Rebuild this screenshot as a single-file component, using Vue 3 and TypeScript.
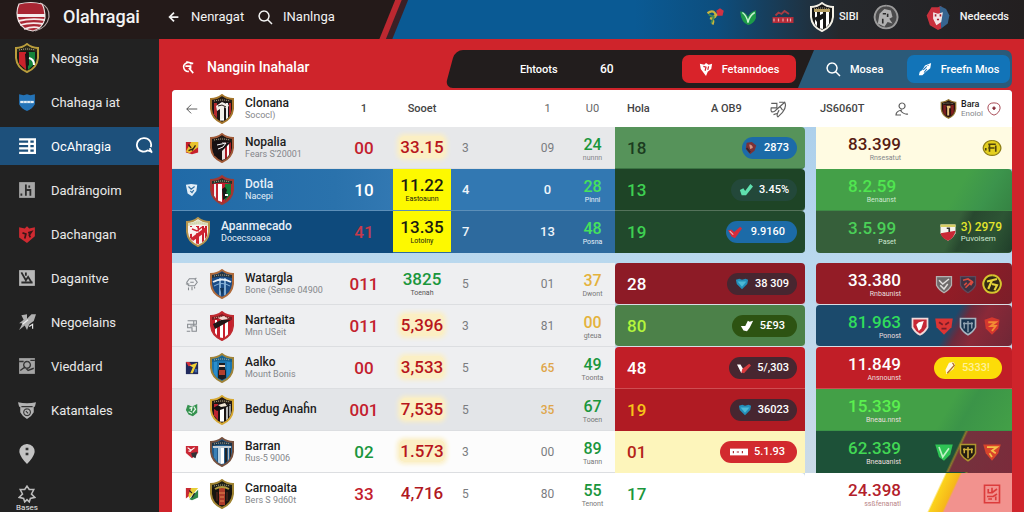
<script setup lang="ts">
import { h } from 'vue'

type Shape = { d: string; f?: string; s?: string; w?: number }
type Stripe = [x: number, width: number, colour: string]
interface CrestSpec {
  trim: string
  field: string
  band: string
  stripes?: Stripe[]
  marks?: Shape[]
}

const SHIELD = 'M2 5 Q8 5 13 1 Q18 5 24 5 V15 Q23 25 13 29 Q3 25 2 15Z'
const BADGE = 'M2 2 H14 V9 Q12 13 8 15 Q4 13 2 9Z'

const crests: Record<string, CrestSpec> = {
  head: { trim: '#a5762c', field: '#1d1616', band: '#251c18', stripes: [[5, 3, '#b32a2e'], [11, 4, '#fff'], [17, 2, '#eee'], [20, 2, '#b4252b']], marks: [{ d: 'M7 12 L13 8 L20 11 L18 15 L15 13 L15 24 L11 26 V15 L8 17Z', f: '#f4f0ea' }, { d: 'M9 12 L13 11 L17 13', s: '#241a18', w: 1 }] },
  nogs: { trim: '#b99d3c', field: '#161a14', band: '#2b2a1c', stripes: [[5, 7, '#c9222b'], [14, 7, '#14843a']], marks: [{ d: 'M11 11 L15 9 L15 22 L12 25 Z', f: '#151515' }, { d: 'M15 15 Q20 16 20 22', s: '#fff', w: 2 }] },
  nopalia: { trim: '#a05a38', field: '#170f10', band: '#201a17', stripes: [[13, 3, '#e8e0df'], [16, 2, '#a81a25'], [18, 2, '#fff'], [20, 2, '#a81a25']], marks: [{ d: 'M4 10 L22 9 L13 18 L5 23Z', f: '#171214' }, { d: 'M8 12 L17 10 L14 14 L9 16', s: '#fff', w: 1 }] },
  dotia: { trim: '#9d3b34', field: '#c2202e', band: '#22352b', stripes: [[5, 2, '#eee'], [9, 4, '#fff'], [16, 6, '#137f3a']], marks: [{ d: 'M13 14 L16 12 L18 15 L17 18 L19 19 L18 22 L14 25Z', f: '#171c19' }, { d: 'M16 19 h3 v2 h-3z', f: '#fff' }] },
  apan: { trim: '#b4944d', field: '#faf3f2', band: '#d9dfbc', stripes: [[5, 2, '#cc2531'], [11, 3, '#cf2431'], [17, 2, '#c81f2e'], [20, 2, '#c81f2e']], marks: [{ d: 'M4 10 H12 L14 16 L5 17Z', f: '#faf3f2' }, { d: 'M22 9 L6 21 L8 24 L22 14Z', f: '#cf2431' }, { d: 'M7 12 L12 14 L17 10', s: '#cf2431', w: 1.5 }] },
  watar: { trim: '#af6a3a', field: '#1b4c86', band: '#23333f', stripes: [[10, 2, '#7faad0'], [15, 2, '#7faad0']], marks: [{ d: 'M4 13 Q13 8 22 13', s: '#e6eff7', w: 2 }, { d: 'M5 17 Q13 12 21 17', s: '#86b2da', w: 1 }, { d: 'M11 19 L13 27 L15 19Z', f: '#123458' }] },
  narte: { trim: '#c02b31', field: '#c71f2d', band: '#7b1f23', stripes: [[6, 2, '#fff'], [11, 3, '#fff'], [16, 3, '#fff']], marks: [{ d: 'M4 13 L14 8 L22 9 L15 13 L6 18Z', f: '#201718' }, { d: 'M9 7 L15 5 L19 8 L13 9Z', f: '#f5d9d2' }] },
  aalko: { trim: '#a08338', field: '#1a75af', band: '#17608e', stripes: [[5, 3, '#2b8ecb'], [18, 3, '#2386c3']], marks: [{ d: 'M10 10 h6 v5 l1 3 v7 l-4 2 l-4 -2 v-7 l1 -3z', f: '#1b1c22' }, { d: 'M10 12 h6 v2 h-6z', f: '#eed2bc' }, { d: 'M10 17 h6 v5 h-6z', f: '#b13f2d' }] },
  bedug: { trim: '#d6a832', field: '#191314', band: '#2a2016', stripes: [[5, 4, '#bd2430'], [11, 4, '#fff'], [17, 2, '#b8b8b8'], [20, 2, '#999']], marks: [{ d: 'M4 13 L13 8 L22 10 L14 14 L8 16Z', f: '#141112' }, { d: 'M9 10 L16 8 L18 11 L12 12Z', f: '#f1e5d4' }] },
  barran: { trim: '#77513f', field: '#245b8a', band: '#1f3345', stripes: [[5, 3, '#3a80b6'], [9, 3, '#bcd2e2'], [12, 3, '#fff'], [16, 2, '#20242a'], [19, 1, '#bbb'], [21, 1, '#222']], marks: [{ d: 'M4 9 H22 V11 H4Z', f: '#c5ced6' }] },
  carno: { trim: '#a08432', field: '#16130f', band: '#1e2218', stripes: [[10, 6, '#ae3b2a']], marks: [{ d: 'M6 10 Q13 6 20 10', s: '#b19b40', w: 2 }, { d: 'M10 14 h6 M11 18 h4 M11 22 h4', s: '#e28b50', w: 1 }, { d: 'M8 13 v9 M18 13 v9', s: '#602821', w: 1 }] },
  juve: { trim: '#f3f0e6', field: '#171717', band: '#171717', stripes: [[6, 2, '#fff'], [11, 3, '#fff'], [17, 3, '#fff']], marks: [{ d: 'M5 7 H21 V10 H5Z', f: '#b39d60' }, { d: 'M5 16 L15 11 L17 15 L8 20Z', f: '#171717' }] },
  bara: { trim: '#8f7430', field: '#2a1011', band: '#211a12', stripes: [[5, 4, '#7d1f20'], [17, 4, '#84211f']], marks: [{ d: 'M10 10 h6 v4 h-2 v11 h-3 v-11z', f: '#e7c27b' }] },
}

const Crest = (props: { name: string }) => {
  const c = crests[props.name]
  return h('svg', { viewBox: '0 0 26 30', 'aria-hidden': 'true' }, [
    h('path', { d: SHIELD, fill: c.field, stroke: c.trim, 'stroke-width': 2 }),
    ...(c.stripes ?? []).map(([x, w, col]) => {
      const end = (p: number) => 27 - ((p - 13) * (p - 13)) / 10
      return h('path', { d: `M${x} 9 H${x + w} V${end(x + w)} L${x} ${end(x)}Z`, fill: col })
    }),
    h('path', { d: 'M3 6 Q9 6 13 3 Q17 6 23 6 V9 Q13 6 3 9Z', fill: c.band }),
    h('path', { d: 'M5 7 Q13 5 21 7', fill: 'none', stroke: '#cfc5a4', 'stroke-width': 1, 'stroke-dasharray': '1 1' }),
    ...(c.marks ?? []).map((m) => h('path', { d: m.d, fill: m.f ?? 'none', stroke: m.s, 'stroke-width': m.w })),
  ])
}
Crest.props = ['name']

const cc = 'currentColor'
const icons: Record<string, Shape[]> = {
  arrow: [{ d: 'M14 8 H2 M7 3 L2 8 L7 13', s: cc, w: 1 }],
  back: [{ d: 'M13 8 H4 M8 3 L3 8 L8 13', s: cc, w: 2 }],
  search: [{ d: 'M7 2 a5 5 0 1 0 0.1 0 M11 11 L15 15', s: cc, w: 1.5 }],
  find: [{ d: 'M12 5 a5 5 0 1 0 -3 8 M9 9 L14 15 M5 7 h6 v3 M6 2 L14 4', s: cc, w: 1.8 }],
  chat: [{ d: 'M8 1 a6 6 0 1 0 3 11 l4 1 M14 9 a6 6 0 0 0 -6 -8 M13 10 l2 4', s: cc, w: 1.6 }],
  list: [{ d: 'M1 2 H15 V14 H1 M1 6 H15 M1 10 H15 M10 2 V14', s: cc, w: 2 }],
  bar: [{ d: 'M1 1 H15 V15 H1Z', f: '#a7a7a7' }, { d: 'M7 3 V13 M7 8 H11 V13 M3 11 V13 M10 4 v2', s: '#2d2d2d', w: 1.6 }],
  redshield: [{ d: 'M1 2 L6 3 L8 1 L10 3 L15 2 V10 L8 16 L1 11Z', f: '#cf2a31' }, { d: 'M4 7 L7 8 L6 12 M9 7 L12 6 L10 9 L11 11', s: '#3b1618', w: 1.5 }],
  blueshield: [{ d: 'M1 1 L5 2 L8 1 L11 2 L15 1 V10 Q13 14 8 16 Q3 14 1 10Z', f: '#2473b7' }, { d: 'M2 7 H14 V9 H2Z', f: '#e3edf5' }, { d: 'M5 7 v2 M8 7 v2 M11 7 v2', s: '#7aa8cf', w: 0.6 }],
  chart: [{ d: 'M1 1 H15 V15 H1Z', f: '#b8b8b8' }, { d: 'M3 3 L7 10 L9 7 L12 12 M3 12 H13 M7 3 V6', s: '#2b2b2b', w: 1.6 }],
  bird: [{ d: 'M3 2 L8 1 L8 5 L12 1 L16 1 L14 7 L10 10 L8 15 L6 11 L1 15 L4 9 L1 9 L5 6Z', f: '#b0b0b0' }, { d: 'M4 10 L9 6 M10 12 l3 -2 v4', s: '#eee', w: 1 }],
  image: [{ d: 'M1 1 H15 V15 H1Z', f: '#a5a5a5' }, { d: 'M1 4 H5 M11 3 H15 M2 12 L6 9 L9 12 L14 10 M8 4 a3 3 0 1 0 .1 0', s: '#333', w: 1.2 }],
  cup: [{ d: 'M0 1 Q8 3 16 1 L15 5 H14 V10 Q12 14 8 16 Q4 14 2 10 V5 H1Z', f: '#b3b3b3' }, { d: 'M8 7 a3 3 0 1 0 .1 0 M3 5 H13 M7 9 l2 2', s: '#353535', w: 1 }],
  pin: [{ d: 'M8 0 A6 6 0 0 1 14 7 Q13 11 8 16 Q3 11 2 7 A6 6 0 0 1 8 0Z', f: '#c3c3c3' }, { d: 'M8 3 v2 M8 7 v2', s: '#333', w: 2.2 }],
  gear: [{ d: 'M8 1 L10 4 L14 4 L12 8 L15 11 L11 12 L10 15 L8 13 L6 15 L5 12 L1 11 L4 8 L2 4 L6 4Z', s: '#bcbcbc', w: 1.4 }],
  flower: [{ d: 'M2 5 Q6 2 8 5 Q10 9 4 9 Q8 10 6 14 M6 8 Q10 7 11 4', s: '#c9b43d', w: 1.8 }, { d: 'M3 6 L7 8 L5 13', s: '#3d8b57', w: 1.4 }, { d: 'M9 3 L12 1 L15 3 L14 7 L10 7Z', f: '#d13243' }],
  leaf: [{ d: 'M1 3 Q6 3 8 8 Q9 4 15 2 V9 Q13 14 8 15 Q2 13 1 3Z', f: '#1d9b48' }, { d: 'M3 4 Q7 7 8 13 Q9 7 14 4', s: '#c7f1cf', w: 1.3 }],
  crown: [{ d: 'M1 8 H15 V12 H1Z', f: '#b52c39' }, { d: 'M3 7 L5 5 L7 6 L9 4 L12 6', s: '#a63c43', w: 1.2 }, { d: 'M2 9 v2 M5 9 v2 M8 9 v2 M11 9 v2 M13 9 v2', s: '#e8a9ae', w: 0.8 }],
  lion: [{ d: 'M8 1 a7 7 0 1 0 .1 0', f: '#4b4b4c', s: '#9b9b9b', w: 1.2 }, { d: 'M3 12 L4 6 L7 3 L11 4 L12 8 L10 9 L12 12 L9 11 L7 14Z', f: '#b0b0b0' }, { d: 'M6 6 h2 M9 6 v2 M6 9 v3', s: '#2a2a2a', w: 1 }],
  mask: [{ d: 'M4 2 L8 2 L10 1 V15 L8 16 L3 13 L1 7Z', f: '#c9303c' }, { d: 'M9 1 L13 3 L15 7 L14 12 L10 15Z', f: '#36648f' }, { d: 'M5 5 L8 6 L11 5 L10 11 L7 13 L5 9Z', f: '#f2e6e6' }, { d: 'M6 7 h1 M9 7 h1 M8 9 v1', s: '#a81f2e', w: 1.3 }],
  heart: [{ d: 'M1 2 L6 3 L8 1 L11 3 L15 2 L14 8 L10 11 L8 16 L5 12 L2 8Z', f: '#fff' }, { d: 'M5 5 L8 6 L7 10 M11 5 L10 9', s: '#d6262f', w: 1.4 }],
  rocket: [{ d: 'M15 1 L14 7 L9 11 L5 15 L1 15 L2 11 L5 9 L8 4Z', f: '#fff' }, { d: 'M6 9 L10 5 M7 12 L10 8 M11 4 h1', s: '#1474bd', w: 1.2 }],
  scribble: [{ d: 'M2 3 H7 V7 H2 Q1 12 5 10 L14 2 Q16 6 12 11 L8 15 Q6 14 9 9 M9 2 L13 2 M4 13 L7 12 M10 6 L12 9', s: '#5e5e5e', w: 1 }],
  person: [{ d: 'M8 2 a3 3 0 1 0 .1 0 M8 9 Q2 10 2 14 H7 M6 9 Q10 14 14 13', s: '#5a5a5a', w: 1.2 }],
  target: [{ d: 'M8 1 Q15 1 15 7 Q14 13 8 15 Q2 13 1 7 Q1 1 8 1', s: '#9d3340', w: 1 }, { d: 'M6 7 H10 M8 5 V9', s: '#7c1b29', w: 1.6 }],
  flagA: [{ d: 'M1 1 H15 V13 L8 15 L1 13Z', f: '#c7212c' }, { d: 'M7 1 H15 V7 L5 14 L1 12Z', f: '#e9c22d' }, { d: 'M4 4 L7 8 M12 5 L8 11 M4 11 L9 9', s: '#302015', w: 1.5 }],
  flagB: [{ d: 'M1 2 L7 1 L14 2 L13 9 L8 15 L3 12Z', f: '#e2eef7' }, { d: 'M4 4 L7 7 L11 4 M6 9 L8 11 L10 8', s: '#2f6fa3', w: 1.4 }],
  flagC: [{ d: 'M5 2 H11 L14 6 L11 10 H4 L2 6Z M1 8 H5 M11 3 L13 1 M4 12 v3 M8 11 v4 M11 11 v2 M6 6 h4', s: '#85898e', w: 1.2 }],
  flagD: [{ d: 'M3 2 H13 V6 H3 V10 H8 V14 H13 V8 H6 M2 14 H6 M10 2 V8', s: '#85898e', w: 1.2 }],
  flagE: [{ d: 'M1 1 H15 V15 H1Z', f: '#20295d' }, { d: 'M1 1 H5 L8 5 L4 6Z', f: '#d6303a' }, { d: 'M5 5 L14 2 L9 14 L6 14 L9 7Z', f: '#f0d136' }, { d: 'M11 9 h3 v4 h-3z', f: '#3e67a6' }],
  flagF: [{ d: 'M3 2 L8 4 L14 1 V11 L9 15 L4 13 L1 8Z', f: '#35924f' }, { d: 'M5 6 L8 5 L7 9 M10 4 L12 7 L9 11 M4 10 L8 12', s: '#e5f4e8', w: 1.5 }],
  flagG: [{ d: 'M1 1 H15 V9 L8 15 L1 9Z', f: '#c92835' }, { d: 'M3 3 L7 6 L11 3 M4 7 h3', s: '#fff', w: 1.3 }, { d: 'M7 9 L14 8 L12 15 L8 13Z', f: '#323236' }],
  flagH: [{ d: 'M1 1 H8 L5 10 L1 13Z', f: '#c82932' }, { d: 'M7 1 H15 L5 13 L4 9Z', f: '#e6cf38' }, { d: 'M15 3 V12 L8 15 L5 14Z', f: '#30864a' }, { d: 'M5 4 L8 7 M11 7 L8 12', s: '#222', w: 1.4 }],
  ball: [{ d: 'M3 2 L9 1 L14 5 L12 11 L7 15 L2 9Z', f: '#7d3135' }, { d: 'M6 4 Q10 4 10 8 L7 9 Z', f: '#d39383' }, { d: 'M3 8 L7 13', s: '#35262e', w: 2 }],
  tickGreen: [{ d: 'M1 8 L5 6 L7 9 L13 1 L16 4 L8 14 L3 14Z', f: '#5fe0ae' }],
  tickRed: [{ d: 'M0 6 L4 5 L7 8 L14 2 L16 4 L8 15 L4 13Z', f: '#d62c3b' }, { d: 'M2 7 L6 11', s: '#f5b1b5', w: 1.4 }],
  tickWhite: [{ d: 'M1 8 L6 8 L9 2 L11 3 L15 2 L11 10 L8 14 L4 13Z', f: '#fff' }],
  tickMix: [{ d: 'M0 4 L4 4 L7 9 L5 14Z', f: '#fff' }, { d: 'M6 9 L14 3 L16 5 L8 14 L5 13Z', f: '#d93a3d' }],
  gem: [{ d: 'M1 3 L5 2 L8 3 L12 2 L15 3 L14 8 L8 14 L2 8Z', f: '#238fb9' }, { d: 'M3 5 H13 L8 11Z', f: '#4dbad6' }],
  ticket: [{ d: 'M0 5 H16 V11 H0Z', f: '#fff' }, { d: 'M3 7 v2 M6 8 h2 M11 7 v2', s: '#a9232c', w: 1 }],
  carrot: [{ d: 'M8 2 L13 1 L15 4 L13 9 L5 15 L4 10Z', f: '#fff8e3' }, { d: 'M12 2 L14 5 L6 14', s: '#b16c22', w: 1.5 }],
  coin: [{ d: 'M8 2 A7 6 0 1 0 8.1 2', f: '#e4cf1f', s: '#8d7d15', w: 1 }, { d: 'M5 5 H11 M5 8 H10 M6 5 V11 M11 6 V11 M3 8 v2', s: '#4e430c', w: 1.3 }],
  cup2: [{ d: BADGE, f: '#f7f3ef' }, { d: 'M2 9 L14 7 Q13 13 8 15 Q3 13 2 9Z', f: '#c92836' }, { d: 'M2 2 H14 V4 H2Z', f: '#d8cf63' }, { d: 'M7 5 h2 v3', s: '#333', w: 1.3 }],
  bGrey: [{ d: BADGE, f: '#6f6a6b', s: '#b5b0b0', w: 1 }, { d: 'M4 5 L7 8 L12 4 M5 9 L8 12 L11 8', s: '#e2dede', w: 1.2 }],
  bDark: [{ d: BADGE, f: '#3e3243', s: '#5e4a5c', w: 1 }, { d: 'M4 5 L8 4 L11 6 L6 11 M10 9 l2 -3 M5 9 l2 -2', s: '#d84b3f', w: 1.4 }],
  bYellow: [{ d: 'M8 1 a7 7 0 1 0 .1 0', f: '#332915', s: '#d6c52e', w: 1.6 }, { d: 'M4 6 L12 4 M8 5 L5 12 M8 8 L12 9 L10 13', s: '#e6d43a', w: 1.7 }],
  bRed: [{ d: BADGE, f: '#c62634', s: '#f0dada', w: 1.4 }, { d: 'M7 5 L11 4 L9 10 L7 12 L5 7Z', f: '#fff' }],
  bFox: [{ d: 'M1 2 H15 L14 9 L8 15 L2 9Z', f: '#dc3534' }, { d: 'M4 5 L7 7 M12 5 L9 7 M6 10 H10', s: '#7a1d28', w: 1.4 }],
  bNavy: [{ d: BADGE, f: '#18344f', s: '#a8b5c0', w: 1.3 }, { d: 'M5 5 V10 M8 4 V13 M11 5 V10 M4 6 H12', s: '#8fa1b0', w: 1.1 }],
  bOrange: [{ d: 'M2 3 L8 1 L14 3 L13 10 L8 15 L3 10Z', f: '#d5372e' }, { d: 'M5 5 H11 L7 8 H11 L8 12', s: '#f38c33', w: 1.5 }],
  bGreen: [{ d: 'M1 2 H15 L13 10 L8 15 L4 12Z', f: '#2fc455' }, { d: 'M4 4 L7 12 L12 5', s: '#bff3c6', w: 1.3 }],
  bBlack: [{ d: BADGE, f: '#221d12', s: '#af952f', w: 1.2 }, { d: 'M5 5 V9 M8 4 V13 M11 5 V9 M4 6 H12', s: '#cfb03a', w: 1.2 }],
  bEagle: [{ d: 'M1 2 H15 L13 9 L8 15 L3 9Z', f: '#d8442b' }, { d: 'M4 4 H12 L8 7 L11 9 M6 9 L8 12', s: '#f6c04a', w: 1.4 }],
  stamp: [{ d: 'M2 1 H14 V15 H2Z M5 4 V7 H8 V3 M8 7 L12 4 M4 10 H9 L12 8 M5 12 H8 M11 10 V13', s: '#dc3c3c', w: 1.3 }],
}

const Icon = (props: { name: string }) =>
  h(
    'svg',
    { viewBox: '0 0 16 16', 'aria-hidden': 'true' },
    icons[props.name].map((p) => h('path', { d: p.d, fill: p.f ?? 'none', stroke: p.s, 'stroke-width': p.w })),
  )
Icon.props = ['name']

const menu = [
  { label: 'Neogsia', crest: 'nogs' },
  { label: 'Chahaga iat', icon: 'blueshield' },
  { label: 'OcAhragia', icon: 'list', active: true },
  { label: 'Dadrängoim', icon: 'bar' },
  { label: 'Dachangan', icon: 'redshield' },
  { label: 'Daganitve', icon: 'chart' },
  { label: 'Negoelains', icon: 'bird' },
  { label: 'Vieddard', icon: 'image' },
  { label: 'Katantales', icon: 'cup' },
]

interface Row {
  id: string
  flag?: string
  crest: string
  name: string
  sub?: string
  rank: string
  rankTone: string
  score: string
  scoreSub?: string
  scoreTone: string
  a: string
  b: string
  bTone?: string
  c: string
  cSub: string
  cTone: string
  d: string
  pill?: { tone: string; icon: string; text: string }
  total: string
  totalSub: string
  badges?: string[]
  extra?: 'prize' | 'chip'
}

const rows: Row[] = [
  { id: 'r1', flag: 'flagA', crest: 'nopalia', name: 'Nopalia', sub: 'Fears S’20001', rank: '00', rankTone: 'red', score: '33.15', scoreTone: 'glow', a: '3', b: '09', c: '24', cSub: 'nunnn', cTone: 'green', d: '18', pill: { tone: 'blue', icon: 'ball', text: '2873' }, total: '83.399', totalSub: 'Rnsesatut', badges: ['coin'] },
  { id: 'r2', flag: 'flagB', crest: 'dotia', name: 'Dotla', sub: 'Nacepi', rank: '10', rankTone: 'white', score: '11.22', scoreSub: 'Eastoaunn', scoreTone: 'box', a: '4', b: '0', c: '28', cSub: 'Pinni', cTone: 'lime', d: '13', pill: { tone: 'moss', icon: 'tickGreen', text: '3.45%' }, total: '8.2.59', totalSub: 'Benaunst' },
  { id: 'r3', crest: 'apan', name: 'Apanmecado', sub: 'Docecsoaoa', rank: '41', rankTone: 'rose', score: '13.35', scoreSub: 'Lotoiny', scoreTone: 'box', a: '7', b: '13', c: '48', cSub: 'Posna', cTone: 'lime', d: '19', pill: { tone: 'blue wide', icon: 'tickRed', text: '9.9160' }, total: '3.5.99', totalSub: 'Paset', extra: 'prize' },
  { id: 'r4', flag: 'flagC', crest: 'watar', name: 'Watargla', sub: 'Bone (Sense 04900', rank: '011', rankTone: 'red', score: '3825', scoreSub: 'Toenah', scoreTone: 'green', a: '5', b: '01', c: '37', cSub: 'Dwont', cTone: 'amber', d: '28', pill: { tone: 'plum', icon: 'gem', text: '38 309' }, total: '33.380', totalSub: 'Rnbaunist', badges: ['bGrey', 'bDark', 'bYellow'] },
  { id: 'r5', flag: 'flagD', crest: 'narte', name: 'Narteaita', sub: 'Mnn USeit', rank: '011', rankTone: 'red', score: '5,396', scoreTone: 'glow', a: '3', b: '81', c: '00', cSub: 'gteua', cTone: 'amber', d: '80', pill: { tone: 'olive', icon: 'tickWhite', text: '5£93' }, total: '81.963', totalSub: 'Ponost', badges: ['bRed', 'bFox', 'bNavy', 'bOrange'] },
  { id: 'r6', flag: 'flagE', crest: 'aalko', name: 'Aalko', sub: 'Mount Bonis', rank: '00', rankTone: 'red', score: '3,533', scoreTone: 'glow', a: '5', b: '65', bTone: 'amber', c: '49', cSub: 'Toonta', cTone: 'green', d: '48', pill: { tone: 'plum', icon: 'tickMix', text: '5/,303' }, total: '11.849', totalSub: 'Ansnounst', extra: 'chip' },
  { id: 'r7', flag: 'flagF', crest: 'bedug', name: 'Bedug Anaĥn', rank: '001', rankTone: 'red', score: '7,535', scoreTone: 'glow', a: '5', b: '35', bTone: 'amber', c: '67', cSub: 'Tooen', cTone: 'green', d: '19', pill: { tone: 'plum', icon: 'gem', text: '36023' }, total: '15.339', totalSub: 'Bneau.nnst' },
  { id: 'r8', flag: 'flagG', crest: 'barran', name: 'Barran', sub: 'Rus-5 9006', rank: '02', rankTone: 'green', score: '1.573', scoreTone: 'glow', a: '3', b: '00', c: '89', cSub: 'Tuann', cTone: 'green', d: '01', pill: { tone: 'crimson', icon: 'ticket', text: '5.1.93' }, total: '62.339', totalSub: 'Bneauanist', badges: ['bGreen', 'bBlack', 'bEagle'] },
  { id: 'r9', flag: 'flagH', crest: 'carno', name: 'Carnoaita', sub: 'Bers S 9d60t', rank: '33', rankTone: 'red', score: '4,716', scoreTone: 'dark', a: '5', b: '80', c: '55', cSub: 'Tenont', cTone: 'green', d: '17', total: '24.398', totalSub: 'ssßfenanatl', badges: ['stamp'] },
]
</script>

<template>
  <div class="app">
    <header class="top">
      <div class="brand">
        <svg class="logo" viewBox="0 0 36 32" aria-hidden="true">
          <path d="M25 2 Q35 6 34 16 Q32 27 20 30" fill="none" stroke="#b5a8a8" stroke-width="1.2" />
          <path d="M4 3 Q16 0 27 3 Q30 8 30 17 Q28 27 18 30 Q8 29 4 21 Q0 12 4 3Z" fill="#a82633" stroke="#eadede" stroke-width="1.2" />
          <path d="M2 13 H30 V16 H2Z" fill="#f6eeee" />
          <path d="M3 20 Q16 17 30 19 M5 24 Q16 21 28 23 M9 28 Q18 25 25 27" fill="none" stroke="#f6e9e9" stroke-width="1.8" />
        </svg>
        <strong class="title">Olahragai</strong>
        <a class="toplink first" href="#"><Icon class="i14" name="back" />Nenragat</a>
        <a class="toplink" href="#"><Icon class="i16" name="search" />INanlnga</a>
      </div>
      <div class="clubs">
        <Icon class="i20" name="flower" />
        <Icon class="i18" name="leaf" />
        <Icon class="i24" name="crown" />
        <span class="pair"><Crest class="crest" name="juve" />SIBI</span>
        <Icon class="i26" name="lion" />
        <a class="account" href="#"><Icon class="i26" name="mask" />Nedeecds</a>
      </div>
    </header>

    <div class="body">
      <nav class="side">
        <a v-for="m in menu" :key="m.label" href="#" class="item" :class="{ active: m.active }">
          <span class="slot">
            <Crest v-if="m.crest" class="crest" :name="m.crest" />
            <Icon v-else class="i18" :name="m.icon ?? ''" />
          </span>
          <span class="label">{{ m.label }}</span>
          <Icon v-if="m.active" class="i18" name="chat" />
        </a>
        <a href="#" class="item" aria-label="Pin"><span class="slot"><Icon class="i20" name="pin" /></span></a>
        <a href="#" class="item"><span class="slot stack"><Icon class="i18" name="gear" />Bases</span></a>
      </nav>

      <main class="main">
        <div class="bar">
          <h1 class="heading"><Icon class="i14" name="find" />Nangıin Inahalar</h1>
          <div class="tools">
            <a class="tab" href="#">Ehtoots</a>
            <a class="tab count" href="#">60</a>
            <button class="btn fav" type="button"><Icon class="i14" name="heart" />Fetanndoes</button>
            <div class="slate">
              <a class="tab find" href="#"><Icon class="i16" name="search" />Mosea</a>
              <button class="btn fresh" type="button"><Icon class="i14" name="rocket" />Freefn Mıos</button>
            </div>
          </div>
        </div>

        <table class="table">
          <colgroup>
            <col />
            <col class="w58" />
            <col class="w58" />
            <col class="w74" />
            <col class="w45" />
            <col class="w45" />
            <col class="w190" />
            <col class="w11" />
            <col class="w196" />
          </colgroup>
          <thead>
            <tr>
              <th>
                <div class="club">
                  <span class="flag"><Icon class="i14" name="arrow" /></span>
                  <Crest class="crest" name="head" />
                  <span class="who"><b>Clonana</b><small>Sococl)</small></span>
                </div>
              </th>
              <th>1</th>
              <th>Sooet</th>
              <th></th>
              <th class="soft">1</th>
              <th class="soft">U0</th>
              <th>
                <div class="split"><span>Hola</span><span class="aob">A OB9</span><Icon class="i18" name="scribble" /></div>
              </th>
              <th></th>
              <th>
                <div class="lasthead">
                  <span class="season">JS6060T</span>
                  <Icon class="i16" name="person" />
                  <span class="mini"><Crest class="crest small" name="bara" /><span class="who tiny"><b>Bara</b><small>Enoiol</small></span><Icon class="i14" name="target" /></span>
                </div>
              </th>
            </tr>
          </thead>
          <tbody>
            <template v-for="r in rows" :key="r.id">
              <tr v-if="r.id === 'r4'" class="spacer" aria-hidden="true"><td colspan="9"></td></tr>
              <tr :class="r.id">
                <td>
                  <div class="club">
                    <span v-if="r.flag" class="flag"><Icon class="i14" :name="r.flag" /></span>
                    <Crest class="crest" :name="r.crest" />
                    <span class="who"><b>{{ r.name }}</b><small v-if="r.sub">{{ r.sub }}</small></span>
                  </div>
                </td>
                <td class="num" :class="r.rankTone">{{ r.rank }}</td>
                <td class="num score" :class="r.scoreTone"><span>{{ r.score }}</span><small v-if="r.scoreSub">{{ r.scoreSub }}</small></td>
                <td class="minor left">{{ r.a }}</td>
                <td class="minor" :class="r.bTone">{{ r.b }}</td>
                <td class="num pts" :class="r.cTone">{{ r.c }}<small>{{ r.cSub }}</small></td>
                <td class="state">
                  <div class="split">
                    <span class="num">{{ r.d }}</span>
                    <span v-if="r.pill" class="pill" :class="r.pill.tone"><Icon class="i16" :name="r.pill.icon" />{{ r.pill.text }}</span>
                  </div>
                </td>
                <td class="gap"></td>
                <td class="total">
                  <div class="sum">
                    <span class="big">{{ r.total }}<small>{{ r.totalSub }}</small></span>
                    <span class="badges">
                      <Icon v-for="b in r.badges" :key="b" class="i20" :name="b" />
                      <span v-if="r.extra === 'prize'" class="prize"><Icon class="i20" name="cup2" /><span>3) 2979<small>Puvoisem</small></span></span>
                      <span v-if="r.extra === 'chip'" class="pill gold"><Icon class="i14" name="carrot" />5333!</span>
                    </span>
                  </div>
                </td>
              </tr>
            </template>
          </tbody>
        </table>
      </main>
    </div>
  </div>
</template>

<style>
body {
  background: #222;
}
</style>

<style scoped>
.app {
  height: 100vh;
  display: flex;
  flex-direction: column;
  overflow: hidden;
  font-family: Roboto, 'Liberation Sans', sans-serif;
  font-size: 13px;
  color: #222;
}
a {
  color: inherit;
  text-decoration: none;
}
svg {
  flex: none;
  display: block;
}
.i14 { width: 14px; height: 14px; }
.i16 { width: 16px; height: 16px; }
.i18 { width: 18px; height: 18px; }
.i20 { width: 20px; height: 20px; }
.i24 { width: 24px; height: 24px; }
.i26 { width: 26px; height: 26px; }
.crest { width: 26px; height: 30px; }
.crest.small { width: 17px; height: 20px; }

.top {
  flex: none;
  height: 39px;
  display: flex;
  justify-content: space-between;
  background: linear-gradient(90deg, #0a5a94 62%, #0d4e7e 70%, #25282c 82%, #231f20);
  color: #f2f2f2;
}
.brand {
  width: 408px;
  display: flex;
  align-items: center;
  padding-bottom: 6px;
  box-sizing: border-box;
  background: linear-gradient(112deg, #241a19 calc(100% - 27px), #bd2830 calc(100% - 26px), #bd2830 calc(100% - 21px), #3b2026 calc(100% - 20px), #3b2026 calc(100% - 15px), transparent calc(100% - 14px));
}
.logo {
  width: 36px;
  height: 32px;
  margin-left: 15px;
}
.title {
  margin-left: 12px;
  font-size: 18px;
  font-weight: 500;
  width: 104px;
}
.toplink {
  display: flex;
  align-items: center;
  gap: 10px;
}
.toplink.first {
  width: 90px;
}
.clubs {
  display: flex;
  align-items: center;
  gap: 14px;
  padding: 0 15px 6px 0;
  font-weight: 500;
  font-size: 11px;
}
.pair,
.account {
  display: flex;
  align-items: center;
  gap: 4px;
}
.account {
  margin-left: 12px;
  gap: 9px;
}

.body {
  flex: 1;
  display: flex;
  min-height: 0;
}
.side {
  flex: none;
  width: 159px;
  background: #222;
  color: #e9e9e9;
  display: flex;
  flex-direction: column;
  gap: 6px;
}
.item {
  flex: none;
  height: 38px;
  display: flex;
  align-items: center;
  padding: 0 6px 0 12px;
}
.item.active {
  background: #1d507b;
  color: #fff;
}
.slot {
  width: 30px;
  display: flex;
  justify-content: center;
  margin-right: 9px;
}
.stack {
  flex-direction: column;
  align-items: center;
  font-size: 8px;
}
.label {
  flex: 1;
}

.main {
  flex: 1;
  min-width: 0;
  padding: 11px 12px 0 13px;
  background: #cf242b;
}
.bar {
  height: 38px;
  margin-bottom: 2px;
  display: flex;
  align-items: center;
  justify-content: space-between;
  color: #fff;
}
.heading {
  margin: 0 0 4px 9px;
  display: flex;
  align-items: center;
  gap: 12px;
  font-size: 14px;
  font-weight: 500;
}
.tools {
  position: relative;
  z-index: 0;
  width: 562px;
  height: 38px;
  display: flex;
  align-items: center;
  font-size: 12px;
}
.tools::before,
.slate::before {
  content: '';
  position: absolute;
  z-index: -1;
  inset: 0 16px 0 0;
  background: #221d1d;
  border-radius: 8px;
  transform: skewX(-15deg);
}
.tab {
  margin-left: 70px;
  width: 36px;
  font-size: 11px;
  font-weight: 500;
}
.tab.count {
  margin-left: 44px;
  font-size: 12px;
}
.btn {
  height: 28px;
  border: 0;
  border-radius: 7px;
  display: flex;
  align-items: center;
  justify-content: center;
  gap: 9px;
  padding: 0;
  font: 500 11px Roboto, 'Liberation Sans', sans-serif;
  color: #fff;
}
.fav {
  width: 114px;
  margin-left: auto;
  background: #d9232a;
}
.slate {
  position: relative;
  z-index: 0;
  width: 216px;
  height: 38px;
  display: flex;
  align-items: center;
  justify-content: space-between;
}
.slate::before {
  inset: 0 0 0 2px;
  border-radius: 0 7px 7px 0;
  background: #2b5a79;
  transform: none;
  clip-path: polygon(16px 0, 100% 0, 100% 100%, 0 100%);
}
.tab.find {
  display: flex;
  align-items: center;
  gap: 9px;
  margin-left: 29px;
  width: auto;
}
.fresh {
  width: 103px;
  margin-right: 2px;
  background: #1274b8;
}

.table {
  width: 100%;
  table-layout: fixed;
  border-spacing: 0;
  background: linear-gradient(#a9cdea, #b9d8ee 40%, #cfdbe6);
  border-radius: 4px 4px 0 0;
}
.w58 { width: 58px; }
.w74 { width: 74px; }
.w45 { width: 45px; }
.w190 { width: 190px; }
.w11 { width: 11px; }
.w196 { width: 196px; }
th {
  height: 37px;
  padding: 0;
  background: #fff;
  font-size: 11px;
  font-weight: 500;
  color: #444;
}
th:first-child {
  border-radius: 4px 0 0 0;
  text-align: left;
}
th:last-child {
  border-radius: 0 4px 0 0;
}
.soft {
  font-weight: 400;
  color: #666;
}
td {
  box-sizing: border-box;
  height: 42px;
  padding: 0;
  text-align: center;
  border-bottom: 1px solid #dcdee1;
  background: #eeeff1;
}
.spacer td {
  height: 10px;
  border: 0;
  background: transparent;
}
.club {
  display: flex;
  align-items: center;
  padding-left: 13px;
  white-space: nowrap;
}
.flag {
  width: 24px;
  display: flex;
}
.club .crest {
  margin-right: 10px;
}
.who {
  display: flex;
  flex-direction: column;
  text-align: left;
  line-height: 13px;
}
.who b {
  font-size: 12px;
  font-weight: 500;
  color: #1c1c1c;
}
.who small {
  font-size: 9px;
  line-height: 11px;
  font-weight: 400;
  color: #85878b;
}
.tiny b {
  font-size: 9px;
  line-height: 9px;
}
.tiny small {
  font-size: 8px;
  line-height: 9px;
}
.split {
  display: flex;
  align-items: center;
  justify-content: space-between;
  padding: 0 8px 0 12px;
}
th .split {
  padding-right: 18px;
}
.aob {
  margin-left: 34px;
}
.lasthead {
  display: flex;
  align-items: center;
  justify-content: space-between;
  padding: 0 11px 0 4px;
}
.season {
  width: 44px;
  text-align: left;
}
.mini {
  display: flex;
  align-items: center;
  gap: 4px;
}

.num {
  font-size: 17px;
  font-weight: 500;
}
.num small,
.big small,
.prize small {
  display: block;
  font-size: 7px;
  line-height: 8px;
  font-weight: 400;
}
.red { color: #c3202d; }
.rose { color: #c63a4b; }
.white { color: #fff; }
.green { color: #1a963c; }
.lime { color: #46e25c; }
.amber { color: #e4b23c; }
.pts {
  font-size: 16px;
  line-height: 19px;
  padding-top: 2px;
}
.pts small {
  color: #777;
}
.score {
  line-height: 19px;
}
.score.green small {
  color: #555;
}
.dark {
  color: #b0181f;
}
.glow {
  color: #b8161c;
}
.glow span {
  padding: 1px;
  border-radius: 5px;
  background: #fbefc4;
  box-shadow: 0 0 4px 2px #fbefc4;
}
td.box {
  background: #fdf900;
  color: #1b1b10;
  border-bottom-color: #c9cd3c;
}
.minor {
  font-size: 12px;
  color: #7a7c80;
}
.minor.amber {
  color: #dfa54a;
  font-weight: 500;
}
.left {
  text-align: left;
  padding-left: 11px;
}
.state {
  border-radius: 0 4px 4px 0;
}
.pill {
  height: 22px;
  min-width: 60px;
  box-sizing: border-box;
  padding: 0 8px;
  border-radius: 11px;
  display: flex;
  align-items: center;
  justify-content: space-between;
  gap: 6px;
  color: #fff;
  font-size: 11px;
  font-weight: 500;
}
.pill svg {
  width: 14px;
  height: 14px;
}
.pill.blue { background: #1c6ba8; min-width: 53px; padding: 0 8px 0 2px; }
.pill.wide { min-width: 71px; padding: 0 12px 0 2px; }
.moss { background: #23483a; }
.plum { background: #472630; }
.olive { background: #2d5312; padding-right: 12px; }
.crimson { background: #d22a2e; min-width: 72px; padding: 0 12px 0 10px; }
.pill.crimson svg { width: 18px; height: 18px; }
.gold { background: #fcdc08; color: #fff09a; min-width: 65px; padding-right: 12px; }

.sum {
  display: flex;
  align-items: center;
  justify-content: space-between;
  padding: 0 10px 0 32px;
}
.big {
  padding-top: 2px;
  font-size: 17px;
  line-height: 19px;
  font-weight: 500;
  text-align: right;
}
.badges {
  display: flex;
  align-items: center;
  gap: 4px;
}
.prize {
  display: flex;
  align-items: center;
  gap: 3px;
  font-size: 12px;
  line-height: 14px;
  font-weight: 500;
  color: #e3e52b;
  text-align: left;
  white-space: nowrap;
}
.prize small {
  font-size: 8px;
  line-height: 9px;
  color: #fff;
}

.r1 td { background: #e7e8ea; }
.r1 .state { background: #56935a; color: #1b3b20; border-color: #3b7443; }
.r1 .total { background: #fffbe2; color: #561b12; border-color: #fffbe2; }
.r1 small { color: #84868a; }

.r2 td { background: #3278b2; border-color: #5c8fb9; }
.r2 td:first-child { background: linear-gradient(90deg, #206aa7, #2a72ac); }
.r2 td.white { background: linear-gradient(90deg, #2a72ac, #3278b2); }
.r2 .who b, .r2 .who small, .r3 .who b, .r3 .who small, .r2 .pts small, .r3 .pts small { color: #e6eff8; }
.r2 .minor, .r3 .minor { color: #eef5fb; font-weight: 500; font-size: 13px; }
.r2 td.box, .r3 td.box { background: #fdf900; }
.r2 .state, .r3 .state { background: #1e4426; color: #3ed152; border-color: #54725a; }
.r2 .total { background: linear-gradient(120deg, #44a048 70%, #3c944c 85%, #358343); color: #50e650; border-color: #3e8a45; border-radius: 0 4px 0 0; }
.r2 .total small, .r3 .total small { color: #cfe8d0; }
.r3 td { background: #2d6a9e; border-color: #2d6a9e; }
.r3 td:first-child, .r3 td.rose { background: #0e4a7c; border-color: #0e4a7c; }
.r3 .state { background: #21492c; border-color: #21492c; }
.r3 .total { background: linear-gradient(115deg, #365f3a 68%, #28482f 74%, #2d5434 88%, #203e2a); color: #4bcf58; border-color: transparent; border-radius: 0 0 4px 4px; }

.r4 .state, .r4 .total { background: #8d1b26; color: #fff; border-color: #d8dde4; border-radius: 4px; }
.r4 .total { background: linear-gradient(120deg, #931c26 65%, #7b1e29); }
.r5 .state { background: #4c8149; color: #b4f53c; border-color: #d8dde4; border-radius: 4px; }
.r5 .total { background: linear-gradient(120deg, #1b4a6c 66%, #6d2a3c 72%, #8a2938 80%, #6f2736); color: #30dd5c; border-color: #d8dde4; border-radius: 4px; }
.r6 .state, .r6 .total { background: #c11e27; color: #fff; border-color: #cf4d52; border-radius: 4px 4px 0 0; }
.r7 td { background: #e3e5e8; }
.r7 .state { background: #b01b23; color: #f6c419; border-color: #b01b23; border-radius: 0; }
.r7 .total { background: linear-gradient(120deg, #43a047 65%, #3b9448 75%, #43a047); color: #5bf04f; border-color: #3b9448; }
.r4 .total small, .r5 .total small, .r6 .total small, .r7 .total small, .r8 .total small { color: #eadfdf; }
.r8 td { background: #fcfcfc; }
.r8 .state { background: #fdf5bb; color: #b42419; border-color: #fdf5bb; border-radius: 0; }
.r8 .total { background: linear-gradient(115deg, #1d5138 69%, #8a7a2c 70%, #74323d 71%, #7b2b3b); color: #42d854; border-color: transparent; }
.r9 td { background: #fff; }
.r9 .state { color: #1a963c; }
.r9 .total { background: linear-gradient(115deg, #fff 60%, #fbd21c 61%, #f6b71a 67%, #f2928e 68%); color: #b3202a; }
.r9 .total small { color: #b98486; }

tr:not(.r9) > .gap { background: transparent; border-color: transparent; }
</style>
